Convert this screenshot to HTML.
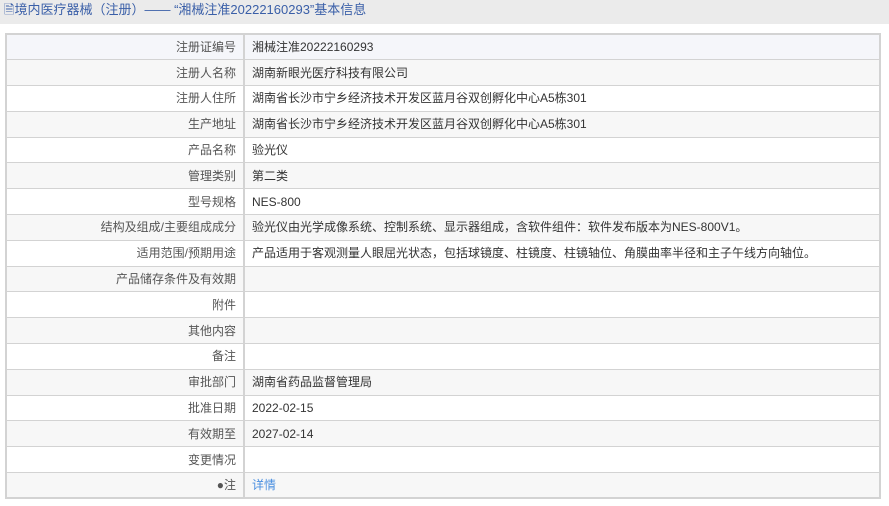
<!DOCTYPE html>
<html><head><meta charset="utf-8"><style>
body{margin:0;background:#fff;font-family:"Liberation Sans","Noto Sans CJK SC",sans-serif;font-size:12px;color:#333;width:889px;height:506px;overflow:hidden}
.hd{height:24px;background:#ebebeb;color:#3a5fa8;font-size:13px;line-height:20px;padding-left:4px}
table{position:absolute;left:5px;top:33px;width:876px;border-collapse:collapse;border:2px solid #d3d3d3}
td{border:1px solid #d3d3d3;height:25.8px;padding:0 7px;line-height:20px;white-space:nowrap;box-sizing:border-box}
td.l{width:238px;text-align:right;color:#555;border-right:2px solid #d3d3d3}
tr:nth-child(even){background:#f7f7f7}
tr:first-child{background:#f5f6fa}
tr:last-child{background:#f7f7f7}
a{color:#4a8fe0;text-decoration:none}
</style></head><body>
<div class="hd">🗎境内医疗器械（注册）—— “湘械注准20222160293”基本信息</div>
<table>
<tr><td class="l">注册证编号</td><td>湘械注准20222160293</td></tr>
<tr><td class="l">注册人名称</td><td>湖南新眼光医疗科技有限公司</td></tr>
<tr><td class="l">注册人住所</td><td>湖南省长沙市宁乡经济技术开发区蓝月谷双创孵化中心A5栋301</td></tr>
<tr><td class="l">生产地址</td><td>湖南省长沙市宁乡经济技术开发区蓝月谷双创孵化中心A5栋301</td></tr>
<tr><td class="l">产品名称</td><td>验光仪</td></tr>
<tr><td class="l">管理类别</td><td>第二类</td></tr>
<tr><td class="l">型号规格</td><td>NES-800</td></tr>
<tr><td class="l">结构及组成/主要组成成分</td><td>验光仪由光学成像系统、控制系统、显示器组成，含软件组件：软件发布版本为NES-800V1。</td></tr>
<tr><td class="l">适用范围/预期用途</td><td>产品适用于客观测量人眼屈光状态，包括球镜度、柱镜度、柱镜轴位、角膜曲率半径和主子午线方向轴位。</td></tr>
<tr><td class="l">产品储存条件及有效期</td><td></td></tr>
<tr><td class="l">附件</td><td></td></tr>
<tr><td class="l">其他内容</td><td></td></tr>
<tr><td class="l">备注</td><td></td></tr>
<tr><td class="l">审批部门</td><td>湖南省药品监督管理局</td></tr>
<tr><td class="l">批准日期</td><td>2022-02-15</td></tr>
<tr><td class="l">有效期至</td><td>2027-02-14</td></tr>
<tr><td class="l">变更情况</td><td></td></tr>
<tr><td class="l">●注</td><td><a>详情</a></td></tr>
</table>
</body></html>
